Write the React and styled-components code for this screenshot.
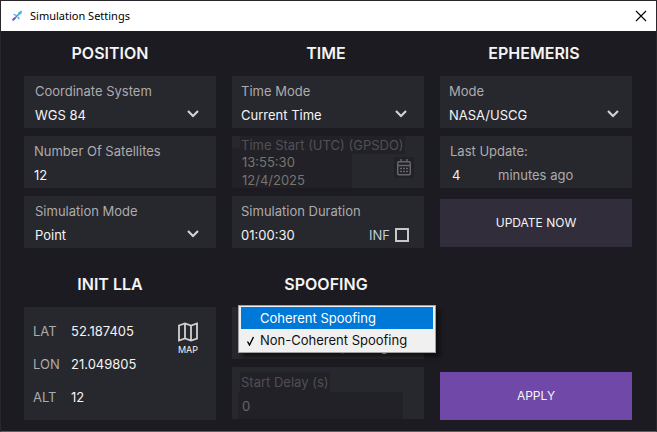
import React from "react";
import styled, { createGlobalStyle } from "styled-components";

const GlobalStyle = createGlobalStyle`
  *, *::before, *::after { box-sizing: border-box; }
  body { margin: 0; background: #1c1b21; }
  button, input, select { font: inherit; color: inherit; }
`;

const Window = styled.div`
  min-height: 100vh;
  display: flex;
  flex-direction: column;
  border: 1px solid #29272b;
  border-bottom-color: #5b5f5f;
  background: #1c1b21;
  color: #f4f4f4;
  font: 13px/18px Inter, "Liberation Sans", sans-serif;
`;

const TitleBar = styled.header`
  display: flex;
  align-items: center;
  height: 30px;
  padding: 0 9px 0 10px;
  background: #fff;
  color: #000;
`;

const Title = styled.h1`
  flex: 1;
  margin: 0 0 0 7px;
  font: 400 11px/16px "Noto Sans", "Open Sans", sans-serif;
`;

const CloseButton = styled.button`
  display: flex;
  padding: 0;
  border: 0;
  background: none;
`;

const Panels = styled.main`
  display: grid;
  grid-template-columns: repeat(3, minmax(0, 1fr));
  gap: 14px 16px;
  padding: 0 24px 11px 23px;
`;

const Section = styled.section`
  display: flex;
  flex-direction: column;
  gap: 8px;
`;

const Heading = styled.h2`
  margin: 0 0 -8px;
  padding-right: ${(p) => p.$shift || 4}px;
  font-size: 16px;
  font-weight: 600;
  line-height: 45px;
  text-align: center;
`;

const Card = styled.div`
  position: relative;
  display: flex;
  flex-direction: column;
  gap: 6px;
  height: 52px;
  padding: 6px 8px 4px ${(p) => p.$inset || 9}px;
  background: #27272e;
`;

const Label = styled.label`
  color: #acacac;
  white-space: nowrap;
`;

const Value = styled.input`
  width: 100%;
  min-width: 0;
  height: 18px;
  padding: 0;
  border: 0;
  outline: 0;
  background: transparent;
`;

const Select = styled.select`
  width: 100%;
  height: 18px;
  padding: 0;
  border: 0;
  outline: 0;
  appearance: none;
  background: transparent;
`;

const SelectArrow = styled.svg`
  position: absolute;
  right: ${(p) => p.$edge}px;
  bottom: 9px;
  pointer-events: none;
`;

const ValueRow = styled.div`
  display: flex;
  align-items: center;
  justify-content: space-between;
`;

const Infinite = styled.label`
  display: flex;
  align-items: center;
  gap: 5px;
  padding-right: 7px;
  color: #bcd0dc;
`;

const CheckBox = styled.input`
  width: 14px;
  height: 14px;
  margin: 0;
  appearance: none;
  border: 2px solid #c8c8c8;
  &:checked { background: #c8c8c8; }
`;

const Age = styled.div`
  display: grid;
  grid-template-columns: 46px 1fr;
  padding-left: 2px;
  color: #acacac;
  & > input { color: #f4f4e0; }
`;

const ActionButton = styled.button`
  height: 48px;
  margin-top: ${(p) => (p.$primary ? "auto" : "3px")};
  border: 0;
  background: ${(p) => (p.$primary ? "#7049a8" : "#322d3b")};
  color: #f4f4f4;
  font-size: 12px;
`;

const DisabledCard = styled.div`
  display: grid;
  grid-template-columns: 120px 1fr;
  height: 52px;
  background: #27272e;
  color: #5c5c5c;
`;

const DisabledStamp = styled.div`
  grid-area: 1 / 1;
  display: flex;
  flex-direction: column;
  align-self: end;
  height: 40px;
  padding: 5px 0 0 10px;
  background: #222127;
  color: #77756f;
`;

const StampInput = styled(Value)`
  flex: none;
  height: 18px;
  line-height: 18px;
`;

const StampLabel = styled.label`
  grid-area: 1 / 1 / 2 / 3;
  justify-self: start;
  align-self: start;
  margin-left: 8px;
  padding: 0 1px;
  background: #222127;
  color: #505054;
  white-space: nowrap;
`;

const CalendarButton = styled.button`
  grid-area: 1 / 2;
  justify-self: end;
  align-self: end;
  display: flex;
  margin: 0 10px 10px 0;
  padding: 2px 3px;
  border: 0;
  background: #222127;
`;

const DelayCard = styled.div`
  display: flex;
  flex-direction: column;
  align-items: start;
  height: 52px;
  padding: 5px 21px 0 6px;
  background: #27272e;
`;

const DelayLabel = styled.label`
  margin-left: 2px;
  padding: 1px 1px;
  background: #222127;
  color: #505054;
`;

const DelayInput = styled(Value)`
  height: 27px;
  padding-left: 4px;
  background: #222127;
  color: #66666a;
`;

const Coordinates = styled.div`
  flex: 1;
  display: flex;
  justify-content: space-between;
  min-height: 112px;
  padding: 15px 17px 14px 9px;
  background: #27272e;
`;

const CoordinateList = styled.div`
  flex: 1;
  display: flex;
  flex-direction: column;
  gap: 15px;
`;

const Coordinate = styled.div`
  display: grid;
  grid-template-columns: 38px minmax(0, 1fr);
`;

const MapButton = styled.button`
  display: flex;
  flex-direction: column;
  align-items: center;
  align-self: start;
  gap: 1px;
  padding: 0;
  border: 0;
  background: none;
  font-size: 9px;
  line-height: 14px;
`;

const Menu = styled.ul`
  position: absolute;
  z-index: 1;
  top: -2px;
  left: 6px;
  right: -12px;
  margin: 0;
  padding: 1px 2px;
  border: 1px solid #a0a0a0;
  background: #f0f0f0;
  box-shadow: 4px 4px 4px rgba(0, 0, 0, 0.5);
  list-style: none;
`;

const MenuItem = styled.li`
  display: grid;
  grid-template-columns: 19px 1fr;
  align-items: center;
  height: 22px;
  background: ${(p) => (p.$active ? "#0078d7" : "transparent")};
  color: ${(p) => (p.$active ? "#fff" : "#111")};
  white-space: nowrap;
`;

function Chevron({ edge }) {
  return (
    <SelectArrow $edge={edge} width="14" height="10" viewBox="0 0 14 10" aria-hidden="true">
      <path d="M2 2l5 5 5-5" fill="none" stroke="#d2d2d2" strokeWidth="2.2" />
    </SelectArrow>
  );
}

function SelectField({ id, label, value, inset, edge = 16, children }) {
  return (
    <Card $inset={inset}>
      <Label htmlFor={id}>{label}</Label>
      <Select id={id} defaultValue={value}>
        <option>{value}</option>
      </Select>
      <Chevron edge={edge} />
      {children}
    </Card>
  );
}

function CoordinateField({ label, value }) {
  const id = label.toLowerCase();
  return (
    <Coordinate>
      <Label htmlFor={id}>{label}</Label>
      <Value id={id} defaultValue={value} />
    </Coordinate>
  );
}

export default function App() {
  return (
    <>
      <GlobalStyle />
      <Window>
        <TitleBar>
          <svg width="12" height="12" viewBox="0 0 12 12" aria-hidden="true">
            <path d="M2 10l8-8" stroke="#3a8fe0" strokeWidth="1.6" />
            <path d="M7 5L7.600 2 11 .6 10.300 4z" fill="#38b9dc" />
            <path d="M.8 9.400L3.600 7 5 8.400 2.200 11z" fill="#7a52dc" />
            <path d="M2.600 4.400l3 1.100M6.800 7l1.600 2.200" fill="none" stroke="#5d9be0" strokeWidth="1.300" />
          </svg>
          <Title>Simulation Settings</Title>
          <CloseButton aria-label="Close">
            <svg width="12" height="12" viewBox="0 0 12 12">
              <path d="M1 1l10 10M11 1L1 11" stroke="#000" strokeWidth="1.1" />
            </svg>
          </CloseButton>
        </TitleBar>
        <Panels>
          <Section>
            <Heading $shift={20}>POSITION</Heading>
            <SelectField id="system" label="Coordinate System" value="WGS 84" inset={11} />
            <Card $inset={10}>
              <Label htmlFor="satellites">Number Of Satellites</Label>
              <Value id="satellites" defaultValue="12" />
            </Card>
            <SelectField id="sim-mode" label="Simulation Mode" value="Point" inset={11} />
          </Section>

          <Section>
            <Heading>TIME</Heading>
            <SelectField id="time-mode" label="Time Mode" value="Current Time" />
            <DisabledCard>
              <DisabledStamp>
                <StampInput id="start-time" defaultValue="13:55:30" disabled />
                <StampInput aria-label="Start date" defaultValue="12/4/2025" disabled />
              </DisabledStamp>
              <StampLabel htmlFor="start-time">Time Start (UTC) (GPSDO)</StampLabel>
              <CalendarButton aria-label="Pick a date" disabled>
                <svg width="14" height="17" viewBox="0 0 14 17" fill="none" stroke="#66666a">
                  <rect x="0.75" y="2.75" width="12.5" height="13" rx="1" strokeWidth="1.5" />
                  <path d="M1 6.5h12M4 0v3M10 0v3" strokeWidth="1.4" />
                  <path d="M3 9.5h2m1 0h2m1 0h2M3 12.5h2m1 0h2m1 0h2" strokeWidth="1.6" />
                </svg>
              </CalendarButton>
            </DisabledCard>
            <Card>
              <Label htmlFor="duration">Simulation Duration</Label>
              <ValueRow>
                <Value id="duration" defaultValue="01:00:30" />
                <Infinite>
                  INF
                  <CheckBox type="checkbox" />
                </Infinite>
              </ValueRow>
            </Card>
          </Section>

          <Section>
            <Heading>EPHEMERIS</Heading>
            <SelectField id="source" label="Mode" value="NASA/USCG" edge={12} />
            <Card $inset={10}>
              <Label htmlFor="age">Last Update:</Label>
              <Age>
                <Value id="age" defaultValue="4" />
                <span>minutes ago</span>
              </Age>
            </Card>
            <ActionButton>UPDATE NOW</ActionButton>
          </Section>

          <Section>
            <Heading $shift={20}>INIT LLA</Heading>
            <Coordinates>
              <CoordinateList>
                <CoordinateField label="LAT" value="52.187405" />
                <CoordinateField label="LON" value="21.049805" />
                <CoordinateField label="ALT" value="12" />
              </CoordinateList>
              <MapButton>
                <svg width="22" height="20" viewBox="0 0 22 20" aria-hidden="true">
                  <path
                    d="M2 3.500L8 1.500l6 2 6-2v15l-6 2-6-2-6 2zM8 1.500v15M14 3.500v15"
                    fill="none"
                    stroke="#d2d2d2"
                    strokeWidth="1.8"
                  />
                </svg>
                MAP
              </MapButton>
            </Coordinates>
          </Section>

          <Section>
            <Heading>SPOOFING</Heading>
            <SelectField id="spoofing" label="Spoofing Mode" value="Non-Coherent Spoofing">
              <Menu role="listbox" aria-label="Spoofing Mode">
                <MenuItem role="option" aria-selected="false" $active>
                  <span />
                  Coherent Spoofing
                </MenuItem>
                <MenuItem role="option" aria-selected="true">
                  <svg width="19" height="12" viewBox="0 0 19 12" aria-hidden="true">
                    <path d="M6.5 7.5l2 3.500L12.500 3" fill="none" stroke="#000" strokeWidth="1.4" />
                  </svg>
                  Non-Coherent Spoofing
                </MenuItem>
              </Menu>
            </SelectField>
            <DelayCard>
              <DelayLabel htmlFor="delay">Start Delay (s)</DelayLabel>
              <DelayInput id="delay" defaultValue="0" disabled />
            </DelayCard>
          </Section>

          <Section>
            <ActionButton $primary>APPLY</ActionButton>
          </Section>
        </Panels>
      </Window>
    </>
  );
}
